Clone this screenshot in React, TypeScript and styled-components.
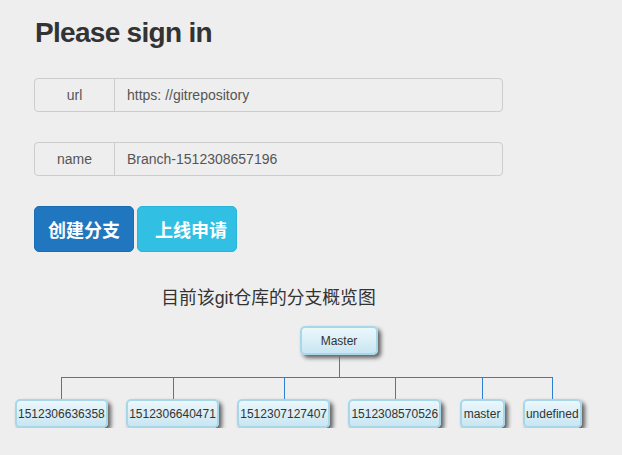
import React from 'react';
import styled, {createGlobalStyle, css} from 'styled-components';

const lineBlue = '#2d7fd3';

const GlobalStyle = createGlobalStyle`
  body {
    margin: 0;
    background: #eeeeee;
    font-family: "Liberation Sans", Arial, "Noto Sans CJK SC", sans-serif;
    color: #333;
  }
`;

const Page = styled.div`
  padding-top: 16px;
`;

const Form = styled.div`
  margin-left: 34px;
  width: 469px;
  display: flex;
  flex-direction: column;
`;

const Title = styled.h2`
  margin: 0 0 29px 1px;
  font-size: 28px;
  line-height: 33px;
  font-weight: 700;
  letter-spacing: -0.7px;
  color: #333;
`;

const InputGroup = styled.div`
  display: flex;
  height: 34px;
  box-sizing: border-box;
  border: 1px solid #ccc;
  border-radius: 4px;
  margin-bottom: 30px;
  font-size: 14px;
  color: #555;
`;

const Addon = styled.span`
  width: 79px;
  flex: none;
  display: flex;
  align-items: center;
  justify-content: center;
  border-right: 1px solid #ccc;
`;

const Field = styled.span`
  flex: 1;
  display: flex;
  align-items: center;
  padding: 0 12px;
`;

const ButtonRow = styled.div`
  display: flex;
  gap: 3px;
`;

const Button = styled.button<{variant: 'primary' | 'info'}>`
  height: 46px;
  width: 100px;
  padding: 0;
  border-radius: 5px;
  font-family: "Liberation Sans", "Noto Sans CJK SC", sans-serif;
  font-size: 18px;
  font-weight: 700;
  color: #fff;
  ${props => props.variant === 'primary' ? css`
    background: #2077bf;
    border: 1px solid #1b6db1;
  ` : css`
    background: #31c0e3;
    border: 1px solid #27b6da;
    padding-left: 8px;
  `}
`;

const ChartTitle = styled.div`
  margin: 35px 0 0 34px;
  width: 469px;
  text-align: center;
  font-family: "Liberation Sans", "Noto Sans CJK SC", sans-serif;
  font-size: 17.8px;
  line-height: 22px;
  color: #333;
`;

const Tree = styled.div`
  margin-top: 17px;
  display: flex;
  flex-direction: column;
`;

const RootCell = styled.div`
  margin-left: 300px;
  width: 78px;
  display: flex;
  flex-direction: column;
  align-items: center;
`;

const Stem = styled.div`
  width: 1px;
  height: 22px;
  background: ${lineBlue};
`;

const Children = styled.div`
  display: flex;
  margin-left: 5.8px;
`;

const Branch = styled.div<{edge: 'first' | 'middle' | 'last'}>`
  position: relative;
  padding: 22px 9.2px 0;

  &::before {
    content: "";
    position: absolute;
    top: 0;
    left: 50%;
    width: 1px;
    height: 22px;
    background: ${lineBlue};
  }

  &::after {
    content: "";
    position: absolute;
    top: 0;
    height: 1px;
    background: ${lineBlue};
    left: ${props => props.edge === 'first' ? '50%' : '0'};
    right: ${props => props.edge === 'last' ? 'calc(50% - 1px)' : '0'};
  }
`;

const Node = styled.div<{wide?: boolean}>`
  box-sizing: border-box;
  height: 29px;
  display: flex;
  align-items: center;
  justify-content: center;
  padding: 0 1px;
  min-width: 45px;
  width: ${props => props.wide ? '78px' : 'auto'};
  border: 2px solid #a9d7ea;
  border-radius: 5px;
  background: linear-gradient(to bottom, #ecf7fc, #c9e6f2);
  box-shadow: 3px 3px 4px rgba(0, 0, 0, 0.6);
  font-size: 12px;
  color: #333;
  white-space: nowrap;
`;

const branches = ['1512306636358', '1512306640471', '1512307127407', '1512308570526', 'master', 'undefined'];

const edgeOf = (index: number): 'first' | 'middle' | 'last' => {
  if (index === 0) {
    return 'first';
  }
  return index === branches.length - 1 ? 'last' : 'middle';
};

const App: React.FC = () => (
  <Page>
    <GlobalStyle />
    <Form>
      <Title>Please sign in</Title>
      <InputGroup>
        <Addon>url</Addon>
        <Field>https: //gitrepository</Field>
      </InputGroup>
      <InputGroup>
        <Addon>name</Addon>
        <Field>Branch-1512308657196</Field>
      </InputGroup>
      <ButtonRow>
        <Button variant="primary">创建分支</Button>
        <Button variant="info">上线申请</Button>
      </ButtonRow>
    </Form>
    <ChartTitle>目前该git仓库的分支概览图</ChartTitle>
    <Tree>
      <RootCell>
        <Node wide>Master</Node>
        <Stem />
      </RootCell>
      <Children>
        {branches.map((name, i) => (
          <Branch key={name} edge={edgeOf(i)}>
            <Node>{name}</Node>
          </Branch>
        ))}
      </Children>
    </Tree>
  </Page>
);

export default App;
